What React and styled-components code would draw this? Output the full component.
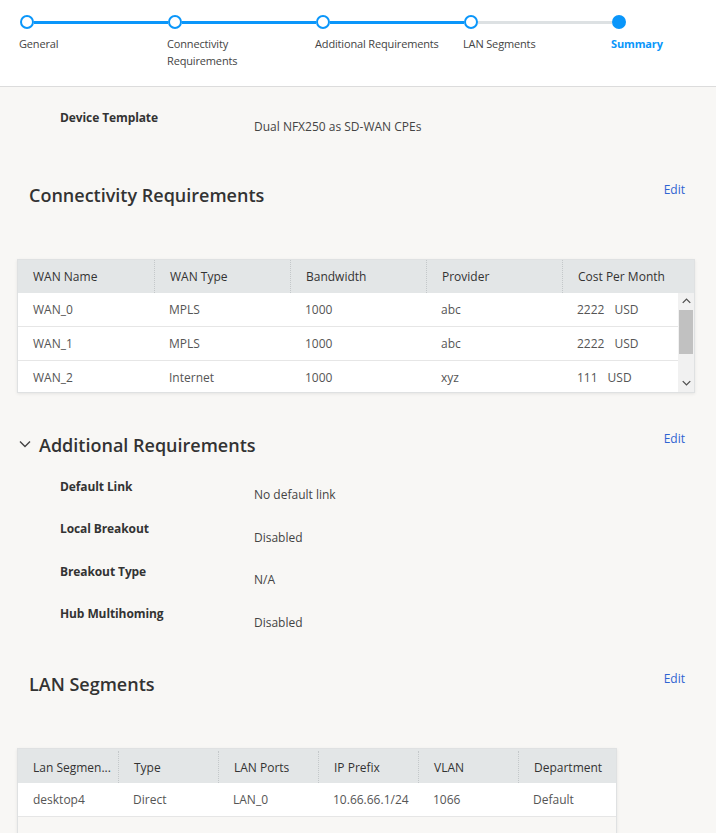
import React from 'react';
import styled, { createGlobalStyle } from 'styled-components';

const GlobalStyle = createGlobalStyle`
  html, body {
    margin: 0;
    padding: 0;
    background: #f8f7f5;
    font-family: "Open Sans", "Liberation Sans", Arial, sans-serif;
    color: #333;
  }
  * { box-sizing: border-box; }
`;

const BLUE = '#0a96fa';

const steps = [
  { label: 'General', state: 'done' },
  { label: 'Connectivity Requirements', state: 'done' },
  { label: 'Additional Requirements', state: 'done' },
  { label: 'LAN Segments', state: 'todo' },
  { label: 'Summary', state: 'current' },
];

const wans = [
  ['WAN_0', 'MPLS', '1000', 'abc', '2222', 'USD'],
  ['WAN_1', 'MPLS', '1000', 'abc', '2222', 'USD'],
  ['WAN_2', 'Internet', '1000', 'xyz', '111', 'USD'],
];

const extras = [
  ['Default Link', 'No default link'],
  ['Local Breakout', 'Disabled'],
  ['Breakout Type', 'N/A'],
  ['Hub Multihoming', 'Disabled'],
];

const lans = [['desktop4', 'Direct', 'LAN_0', '10.66.66.1/24', '1066', 'Default']];

const Chevron = ({ up, color = '#444', size = 12 }) => (
  <svg width={size} height={size * 0.67} viewBox="0 0 12 8">
    <path
      d={up ? 'M1 6.5 L6 1.5 L11 6.5' : 'M1 1.5 L6 6.5 L11 1.5'}
      fill="none"
      stroke={color}
      strokeWidth={up !== undefined ? 1.8 : 1.4}
    />
  </svg>
);

const App = () => (
  <>
    <GlobalStyle />
    <Header>
      <Stepper>
        {steps.map((s, i) => (
          <Step key={s.label}>
            <Track>
              <Dot current={s.state === 'current'} />
              {i < steps.length - 1 && <Line done={s.state === 'done'} />}
            </Track>
            <StepLabel current={s.state === 'current'}>{s.label}</StepLabel>
          </Step>
        ))}
      </Stepper>
    </Header>
    <Main>
      <KeyValues>
        <KVRow>
          <Key>Device Template</Key>
          <Value>Dual NFX250 as SD-WAN CPEs</Value>
        </KVRow>
      </KeyValues>

      <SectionHead>
        <Title>Connectivity Requirements</Title>
        <Edit>Edit</Edit>
      </SectionHead>
      <Table>
        <HeadRow cols="136px">
          {['WAN Name', 'WAN Type', 'Bandwidth', 'Provider', 'Cost Per Month'].map((h) => (
            <HeadCell key={h}>{h}</HeadCell>
          ))}
        </HeadRow>
        <ScrollArea>
          <Rows>
            {wans.map((w) => (
              <Row key={w[0]} cols="136px">
                <Cell>{w[0]}</Cell>
                <Cell>{w[1]}</Cell>
                <Cell>{w[2]}</Cell>
                <Cell>{w[3]}</Cell>
                <Cell>
                  {w[4]}
                  <Unit>{w[5]}</Unit>
                </Cell>
              </Row>
            ))}
          </Rows>
          <ScrollBar>
            <ScrollButton>
              <Chevron up size={9} color="#505050" />
            </ScrollButton>
            <ScrollTrack>
              <Thumb />
            </ScrollTrack>
            <ScrollButton>
              <Chevron up={false} size={9} color="#505050" />
            </ScrollButton>
          </ScrollBar>
        </ScrollArea>
      </Table>

      <SectionHead gap="37px">
        <Title collapsible>
          <Chevron />
          Additional Requirements
        </Title>
        <Edit>Edit</Edit>
      </SectionHead>
      <KeyValues top="21px">
        {extras.map(([k, v]) => (
          <KVRow key={k}>
            <Key>{k}</Key>
            <Value>{v}</Value>
          </KVRow>
        ))}
      </KeyValues>

      <SectionHead gap="39px">
        <Title>LAN Segments</Title>
        <Edit>Edit</Edit>
      </SectionHead>
      <Table width="600px" top="52px">
        <HeadRow cols="100px" tall>
          {['Lan Segmen...', 'Type', 'LAN Ports', 'IP Prefix', 'VLAN', 'Department'].map((h) => (
            <HeadCell key={h}>{h}</HeadCell>
          ))}
        </HeadRow>
        <PlainBody>
          {lans.map((l) => (
            <Row key={l[0]} cols="100px">
              {l.map((c, i) => (
                <Cell key={i}>{c}</Cell>
              ))}
            </Row>
          ))}
        </PlainBody>
      </Table>
    </Main>
  </>
);

const Header = styled.div`
  background: #fff;
  height: 87px;
  border-bottom: 1px solid #dcdcdc;
  padding: 15px 0 0 20px;
`;

const Stepper = styled.div`
  display: flex;
`;

const Step = styled.div`
  width: 148px;
  flex-shrink: 0;
  &:last-child {
    width: auto;
  }
`;

const Track = styled.div`
  display: flex;
  align-items: center;
  height: 14px;
`;

const Dot = styled.div`
  width: 14px;
  height: 14px;
  border-radius: 50%;
  border: 2px solid ${BLUE};
  background: ${(p) => (p.current ? BLUE : '#fff')};
  flex-shrink: 0;
`;

const Line = styled.div`
  flex: 1;
  height: 3px;
  background: ${(p) => (p.done ? BLUE : '#dde1e3')};
`;

const StepLabel = styled.div`
  margin: 6px 0 0 -1px;
  width: 128px;
  font-size: 11px;
  letter-spacing: -0.15px;
  line-height: 17px;
  color: ${(p) => (p.current ? BLUE : '#444')};
  font-weight: ${(p) => (p.current ? 700 : 400)};
`;

const Main = styled.main`
  padding: 22px 21px 40px 17px;
`;

const KeyValues = styled.div`
  display: flex;
  flex-direction: column;
  gap: 17px;
  padding-left: 43px;
  margin-top: ${(p) => p.top || '0'};
`;

const KVRow = styled.div`
  display: grid;
  grid-template-columns: 194px 1fr;
`;

const Key = styled.div`
  font-size: 12px;
  line-height: 17px;
  font-weight: 700;
  letter-spacing: -0.1px;
  color: #333;
`;

const Value = styled.div`
  font-size: 12px;
  line-height: 17px;
  padding-top: 8.5px;
  color: #444;
`;

const SectionHead = styled.div`
  display: flex;
  justify-content: space-between;
  align-items: flex-start;
  margin-top: ${(p) => p.gap || '46px'};
`;

const Title = styled.h2`
  margin: 2.5px 0 0;
  padding-left: ${(p) => (p.collapsible ? '2px' : '12px')};
  display: flex;
  align-items: center;
  gap: 8px;
  font-size: 18px;
  line-height: 24px;
  font-weight: 600;
  color: #333;
`;

const Edit = styled.a`
  font-size: 12px;
  line-height: 17px;
  color: #2f64d2;
  margin-right: 10px;
  cursor: pointer;
`;

const Table = styled.div`
  width: ${(p) => p.width || '678px'};
  margin-top: ${(p) => p.top || '52px'};
  border: 1px solid #dfe1e2;
  box-shadow: 0 1px 3px rgba(0, 0, 0, 0.08);
  font-size: 12px;
`;

const HeadRow = styled.div`
  display: grid;
  grid-auto-flow: column;
  grid-auto-columns: ${(p) => p.cols};
  background: #e3e6e7;
  height: ${(p) => (p.tall ? '34px' : '33px')};
  padding-top: ${(p) => (p.tall ? '2px' : '0')};
`;

const HeadCell = styled.div`
  display: flex;
  align-items: center;
  padding-left: 15px;
  color: #333;
  white-space: nowrap;
  overflow: hidden;
  & + & {
    border-left: 1px dotted #c4c8ca;
  }
`;

const ScrollArea = styled.div`
  display: flex;
  height: 99px;
  background: #fff;
`;

const Rows = styled.div`
  flex: 1;
  overflow: hidden;
`;

const ScrollBar = styled.div`
  width: 16px;
  display: flex;
  flex-direction: column;
  background: #f1f1f1;
`;

const ScrollButton = styled.div`
  height: 17px;
  display: flex;
  align-items: center;
  justify-content: center;
`;

const ScrollTrack = styled.div`
  flex: 1;
`;

const Thumb = styled.div`
  height: 44px;
  margin: 0 1px;
  background: #c1c1c1;
`;

const PlainBody = styled.div`
  min-height: 100px;
`;

const Row = styled.div`
  display: grid;
  grid-auto-flow: column;
  grid-auto-columns: ${(p) => p.cols};
  height: 34px;
  background: #fff;
  border-bottom: 1px solid #e6e6e6;
`;

const Cell = styled.div`
  display: flex;
  align-items: center;
  padding-left: 15px;
  color: #555;
  white-space: nowrap;
`;

const Unit = styled.span`
  margin-left: 10px;
`;

export default App;
